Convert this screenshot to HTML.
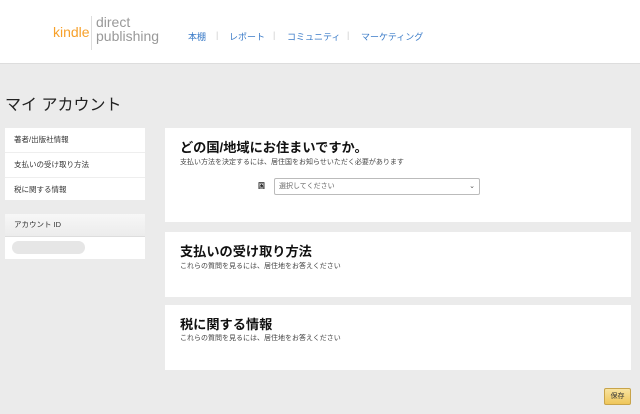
<!DOCTYPE html><html><head><meta charset="utf-8"><style>
body{margin:0;width:640px;height:414px;background:#ebebeb;font-family:"Liberation Sans","Noto Sans CJK JP",sans-serif;position:relative;overflow:hidden;color:#222}
.a{position:absolute}
.hdr{left:0;top:0;width:640px;height:63px;background:#fff;border-bottom:1px solid #ddd}
.nav{top:30px;font-size:9px;color:#3a7bc8}
.card{background:#fff;left:165px;width:466px}
.side{background:#fff;left:5px;width:140px}
.si{height:24px;border-bottom:1px solid #eee;font-size:7.5px;line-height:24px;padding-left:9px;color:#333}
h2{margin:0;font-size:13.2px;font-weight:bold;position:absolute;left:15px;color:#111}
.sub{position:absolute;left:15px;font-size:7px;color:#444}
</style></head><body>
<div class="a hdr">
<div class="a" style="left:53px;top:24px;font-size:14px;color:#f7a12b">kindle</div>
<div class="a" style="left:91px;top:16px;width:1px;height:34px;background:#ddd"></div>
<div class="a" style="left:96px;top:15px;font-size:14px;line-height:14px;color:#999">direct<br>publishing</div>
<div class="a nav" style="left:188px">本棚</div>
<div class="a nav" style="left:216px;color:#ccc">|</div>
<div class="a nav" style="left:229px">レポート</div>
<div class="a nav" style="left:273px;color:#ccc">|</div>
<div class="a nav" style="left:287px">コミュニティ</div>
<div class="a nav" style="left:347px;color:#ccc">|</div>
<div class="a nav" style="left:361px">マーケティング</div>
</div>
<div class="a" style="left:5px;top:91px;font-size:16px;color:#222">マイ アカウント</div>
<div class="a side" style="top:128px;height:72px">
<div class="si">著者/出版社情報</div><div class="si">支払いの受け取り方法</div><div class="si" style="border:0">税に関する情報</div></div>
<div class="a side" style="top:214px;height:45px">
<div style="height:22px;background:linear-gradient(#f7f7f7,#ececec);border-bottom:1px solid #ddd;font-size:7.5px;line-height:22px;padding-left:9px;color:#333">アカウント ID</div>
<div class="a" style="left:7px;top:27px;width:73px;height:13px;border-radius:7px;background:#e6e6e6"></div></div>
<div class="a card" style="top:128px;height:94px">
<h2 style="top:9px">どの国/地域にお住まいですか。</h2>
<div class="sub" style="top:29px">支払い方法を決定するには、居住国をお知らせいただく必要があります</div>
<div class="a" style="left:93px;top:53px;font-size:7px;font-weight:bold">国</div>
<div class="a" style="left:109px;top:50px;border:1px solid #bbb;border-radius:2px;font-size:7px;line-height:15px;color:#666;padding-left:4px;box-sizing:border-box;width:206px;height:17px">選択してください<span style="position:absolute;right:4px;color:#555">⌄</span></div>
</div>
<div class="a card" style="top:232px;height:65px">
<h2 style="top:9px">支払いの受け取り方法</h2>
<div class="sub" style="top:29px">これらの質問を見るには、居住地をお答えください</div></div>
<div class="a card" style="top:305px;height:65px">
<h2 style="top:9px">税に関する情報</h2>
<div class="sub" style="top:28px">これらの質問を見るには、居住地をお答えください</div></div>
<div class="a" style="left:604px;top:388px;width:27px;height:17px;border:1px solid #c8a44a;border-radius:2px;background:linear-gradient(#f8e3a0,#efc65a);box-sizing:border-box;font-size:7px;line-height:15px;text-align:center;color:#333">保存</div>
</body></html>
